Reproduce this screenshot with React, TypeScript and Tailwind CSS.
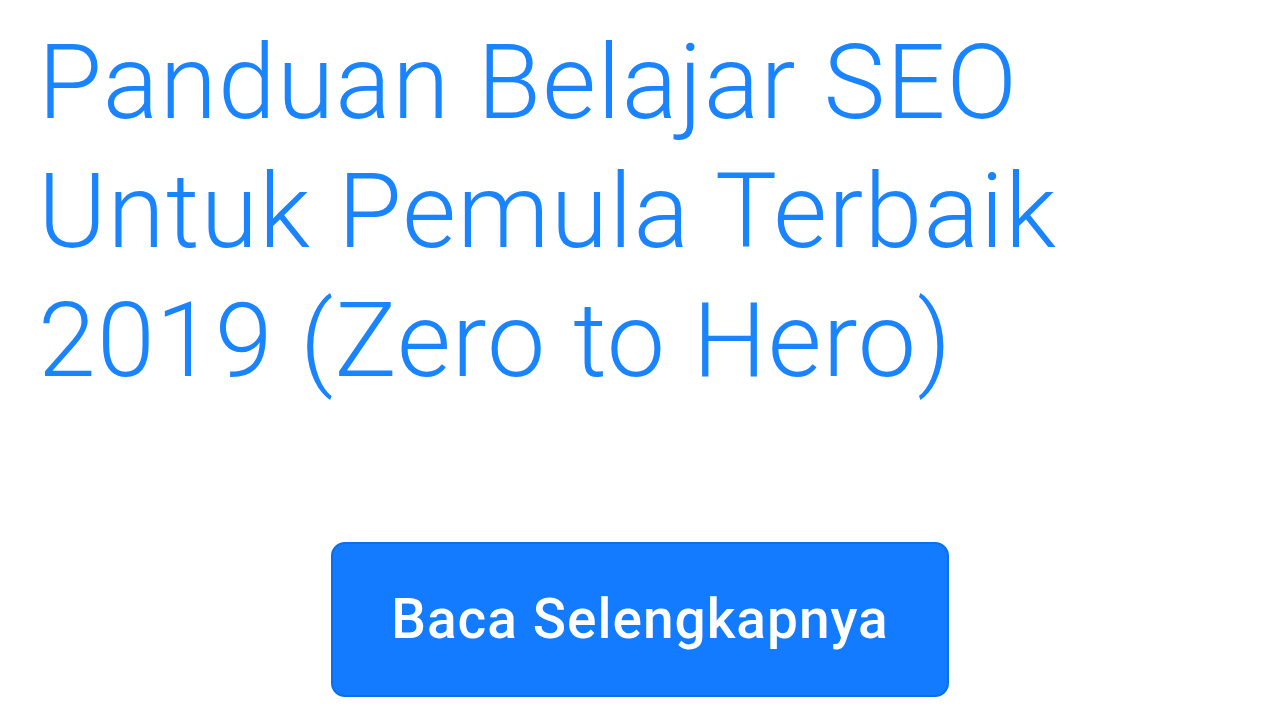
export default function App() {
  return (
    <div className="min-h-screen bg-white font-['Roboto',sans-serif]">
      <div className="pl-[38px] pt-[18px]">
        <h1 className="text-[104px] leading-[129px] font-light text-[#1a84ff] tracking-[1.2px]">
          Panduan Belajar SEO
          <br />
          Untuk Pemula Terbaik
          <br />
          2019 (Zero to Hero)
        </h1>
      </div>
      <div className="flex justify-center pt-[137px]">
        <button className="w-[618px] h-[155px] rounded-[14px] bg-[#137bff] border-2 border-[#0a6fe8] text-white text-[55px] tracking-[1px] font-medium">
          Baca Selengkapnya
        </button>
      </div>
    </div>
  );
}
